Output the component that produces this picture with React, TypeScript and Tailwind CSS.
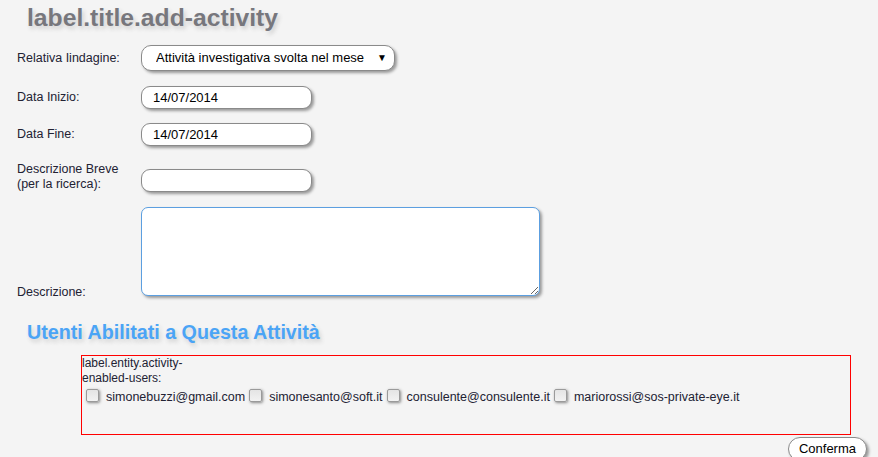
import React from "react";

const users = [
    "simonebuzzi@gmail.com",
    "simonesanto@soft.it",
    "consulente@consulente.it",
    "mariorossi@sos-private-eye.it",
];

const inputCls =
    "h-[23px] w-[171px] rounded-[9px] border border-[#8a8a8a] bg-white px-[11px] text-[13px] text-black shadow-[2px_2px_3px_#9a9a9a] outline-none";

export default function App() {
    return (
        <div className="min-h-[457px] w-full bg-[#f4f4f4] pl-[17px] font-['Liberation_Sans',Arial,sans-serif] text-[12.5px] text-[#222233]">
            <h1 className="pt-[4px] pl-[10px] text-[24.7px] leading-[28px] font-bold text-[#77777d] [text-shadow:2px_3px_4px_#cfcfcf]">
                label.title.add-activity
            </h1>

            {/* Form */}
            <div className="mt-[13px] flex items-center">
                <label className="w-[124px]">Relativa Iindagine:</label>
                <div className="relative">
                    <select className="h-[26px] w-[254px] appearance-none rounded-[10px] border border-[#8a8a8a] bg-white pl-[14px] text-[13px] text-black shadow-[2px_2px_3px_#9a9a9a] outline-none">
                        <option>Attività investigativa svolta nel mese</option>
                    </select>
                    <span className="pointer-events-none absolute top-[5px] right-[8px] text-[10px] text-black">▼</span>
                </div>
            </div>

            <div className="mt-[15px] flex items-center">
                <label className="w-[124px]">Data Inizio:</label>
                <input className={inputCls} defaultValue="14/07/2014" />
            </div>

            <div className="mt-[14px] flex items-center">
                <label className="w-[124px]">Data Fine:</label>
                <input className={inputCls} defaultValue="14/07/2014" />
            </div>

            <div className="mt-[16px] flex items-end">
                <label className="w-[124px] leading-[15px]">
                    Descrizione Breve
                    <br />
                    (per la ricerca):
                </label>
                <input className={inputCls} />
            </div>

            <div className="mt-[15px] flex items-end">
                <label className="-mb-[4px] w-[124px] leading-[15px]">Descrizione:</label>
                <textarea className="h-[89px] w-[399px] rounded-[7px] border border-[#5c9fe0] bg-white shadow-[2px_2px_3px_#9a9a9a] outline-none" />
            </div>

            {/* Utenti */}
            <h2 className="mt-[24px] pl-[10px] text-[19.7px] leading-[24px] font-bold text-[#4aa4f6] [text-shadow:2px_3px_4px_#cfcfcf]">
                Utenti Abilitati a Questa Attività
            </h2>

            <div className="mt-[11px] ml-[64px] h-[80px] w-[770px] border border-[#ff0000]">
                <div className="w-[110px] text-[12px] leading-[15px]">label.entity.activity- enabled-users:</div>
                <div className="flex items-end">
                    {users.map((u) => (
                        <label key={u} className="flex items-end">
                            <input
                                type="checkbox"
                                className="my-[3px] mr-[7px] ml-[4px] h-[13px] w-[13px] appearance-none rounded-[2px] border border-[#9a9a9a] bg-gradient-to-b from-[#e4e4e4] to-[#f2f2f2] shadow-[1px_1px_3px_#888]"
                            />
                            <span className="leading-[15px] text-[#222233]">{u}</span>
                        </label>
                    ))}
                </div>
            </div>

            <div className="mt-[2px] flex justify-end pr-[11px]">
                <button className="h-[24px] rounded-full border border-[#8a8a8a] bg-white px-[10px] text-[13px] leading-[20px] text-black shadow-[2px_2px_3px_#9a9a9a]">
                    Conferma
                </button>
            </div>
        </div>
    );
}
